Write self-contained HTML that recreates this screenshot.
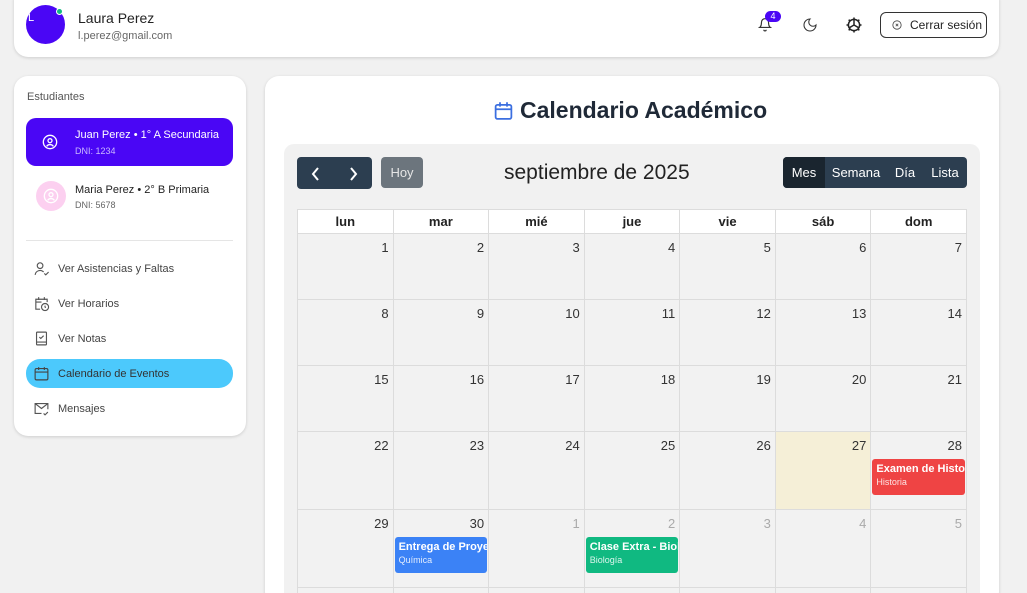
<!DOCTYPE html>
<html style="width:1027px;height:593px;overflow:hidden"><head><meta charset="utf-8">
<style>
*{box-sizing:border-box;margin:0;padding:0}
body{width:1027px;height:593px;overflow:hidden;background:#f1f1f1;font-family:"Liberation Sans",sans-serif;position:relative;color:#1f2937}
.abs{position:absolute}
.card{position:absolute;background:#fff;border-radius:14px;box-shadow:0 1px 3px rgba(0,0,0,.15)}
.nav{position:absolute;left:26px;width:207px;height:29px;border-radius:14px;font-size:11px;color:#444;display:flex;align-items:center;padding-left:32px}
.nav svg{position:absolute;left:7px;top:6px}
.grid{position:absolute;left:297px;top:209px;width:670px;border-collapse:collapse;table-layout:fixed}
.grid td,.grid th{border:1px solid #dcdcdc}
.grid th{background:#fff;height:24px;font-size:13px;font-weight:bold;color:#222}
.grid td{background:#f2f2f2;vertical-align:top;text-align:right;font-size:13px;color:#333;padding:6px 4px 0 0;position:relative}
.grid td.o{color:#aaa}
.ev{position:absolute;left:1px;right:1px;top:27px;height:36px;border-radius:3px;color:#fff;text-align:left;padding:4px 0 0 4px;overflow:hidden;white-space:nowrap}
.ev b{display:block;font-size:11px}
.ev span{display:block;font-size:9px;opacity:.85;margin-top:2px}
</style></head><body>
<div class="card" style="left:14px;top:-14px;width:985px;height:71px"></div>
<div class="abs" style="left:26px;top:5px;width:39px;height:39px;border-radius:50%;background:#4a06f5"></div>
<div class="abs" style="left:28px;top:12px;color:#fff;font-size:11px">L</div>
<div class="abs" style="left:56px;top:8px;width:7px;height:7px;border-radius:50%;background:#10b981;border:1px solid #fff"></div>
<div class="abs" style="left:78px;top:10px;font-size:14px;color:#222">Laura Perez</div>
<div class="abs" style="left:78px;top:30px;font-size:11px;color:#666">l.perez@gmail.com</div>
<svg class="abs" style="left:758px;top:17px" width="14" height="15" viewBox="0 0 24 24" fill="none" stroke="#333" stroke-width="2"><path d="M6 8a6 6 0 0 1 12 0c0 7 3 9 3 9H3s3-2 3-9"/><path d="M10 21a2 2 0 0 0 4 0"/></svg>
<div class="abs" style="left:765px;top:11px;width:16px;height:11px;border-radius:6px;background:#4a06f5;color:#fff;font-size:9px;text-align:center;line-height:11px">4</div>
<svg class="abs" style="left:802px;top:17px" width="16" height="16" viewBox="0 0 24 24" fill="none" stroke="#333" stroke-width="1.6"><path d="M12 3a6 6 0 0 0 9 9 9 9 0 1 1-9-9z"/></svg>
<svg class="abs" style="left:845px;top:16px" width="18" height="18" viewBox="0 0 24 24" fill="none" stroke="#222" stroke-width="2"><circle cx="12" cy="12" r="7.5"/><path d="M12 2v3M12 19v3M2 12h3M19 12h3M4.9 4.9l2.1 2.1M17 17l2.1 2.1M4.9 19.1L7 17M17 7l2.1-2.1"/><path d="M12 12V5M12 12l-6 3.5M12 12l6 3.5"/></svg>
<div class="abs" style="left:880px;top:12px;width:107px;height:26px;border:1px solid #333;border-radius:6px;font-size:12px;color:#222;line-height:24px;padding-left:29px">Cerrar sesión</div>
<svg class="abs" style="left:892px;top:20px" width="10" height="10" viewBox="0 0 24 24" fill="none" stroke="#444" stroke-width="2"><circle cx="12" cy="12" r="10"/><path d="M9 9l6 6M15 9l-6 6"/></svg>

<div class="card" style="left:14px;top:76px;width:232px;height:360px"></div>
<div class="abs" style="left:27px;top:91px;font-size:11px;color:#555">Estudiantes</div>
<div class="abs" style="left:26px;top:118px;width:207px;height:48px;border-radius:10px;background:#4a06f5"></div>
<svg class="abs" style="left:42px;top:134px" width="16" height="16" viewBox="0 0 24 24" fill="none" stroke="#fff" stroke-width="2"><circle cx="12" cy="12" r="10"/><circle cx="12" cy="10" r="3"/><path d="M7 18.5a6 6 0 0 1 10 0"/></svg>
<div class="abs" style="left:75px;top:129px;font-size:11px;color:#fff">Juan Perez • 1° A Secundaria</div>
<div class="abs" style="left:75px;top:146px;font-size:9px;color:#c9b8ff">DNI: 1234</div>
<div class="abs" style="left:36px;top:181px;width:30px;height:30px;border-radius:50%;background:#fcd0f0"></div>
<svg class="abs" style="left:43px;top:188px" width="16" height="16" viewBox="0 0 24 24" fill="none" stroke="#fff" stroke-width="2"><circle cx="12" cy="12" r="10"/><circle cx="12" cy="10" r="3"/><path d="M7 18.5a6 6 0 0 1 10 0"/></svg>
<div class="abs" style="left:75px;top:184px;font-size:11px;color:#222">Maria Perez • 2° B Primaria</div>
<div class="abs" style="left:75px;top:200px;font-size:9px;color:#666">DNI: 5678</div>
<div class="abs" style="left:26px;top:240px;width:207px;height:1px;background:#e5e5e5"></div>
<div class="nav" style="top:254px"><svg width="17" height="17" viewBox="0 0 24 24" fill="none" stroke="#555" stroke-width="1.6"><circle cx="10" cy="8" r="4"/><path d="M3 21a7 7 0 0 1 12-4M16 19l2 2 4-4"/></svg>Ver Asistencias y Faltas</div>
<div class="nav" style="top:289px"><svg width="17" height="17" viewBox="0 0 24 24" fill="none" stroke="#555" stroke-width="1.6"><path d="M10 20H4V6h16v4M4 10h8M8 3v4M16 3v4"/><circle cx="17" cy="17" r="5"/><path d="M17 15v2l1 1"/></svg>Ver Horarios</div>
<div class="nav" style="top:324px"><svg width="17" height="17" viewBox="0 0 24 24" fill="none" stroke="#555" stroke-width="1.6"><rect x="5" y="3" width="14" height="18" rx="1"/><path d="M5 17h14M9 10l2 2 4-4"/></svg>Ver Notas</div>
<div class="nav" style="top:359px;background:#4cc9fc;color:#333"><svg width="17" height="17" viewBox="0 0 24 24" fill="none" stroke="#444" stroke-width="1.6"><rect x="3" y="5" width="18" height="16" rx="2"/><path d="M3 10h18M8 3v4M16 3v4"/></svg>Calendario de Eventos</div>
<div class="nav" style="top:394px"><svg width="17" height="17" viewBox="0 0 24 24" fill="none" stroke="#555" stroke-width="1.6"><path d="M12 19H3V5h18v8M3 5l9 7 9-7M15 19l2 2 4-4"/></svg>Mensajes</div>

<div class="card" style="left:265px;top:76px;width:734px;height:530px"></div>
<svg class="abs" style="left:493px;top:100px" width="21" height="22" viewBox="0 0 24 24" fill="none" stroke="#3b6fe0" stroke-width="2"><rect x="3" y="5" width="18" height="16" rx="2"/><path d="M3 10h18M8 2v5M16 2v5"/></svg>
<div class="abs" style="left:520px;top:97px;font-size:23px;font-weight:bold;color:#1f2937">Calendario Académico</div>
<div class="abs" style="left:284px;top:144px;width:696px;height:449px;background:#f1f1f1;border-radius:10px 10px 0 0"></div>
<div class="abs" style="left:297px;top:157px;width:75px;height:32px;background:#2c3e50;border-radius:4px"></div>
<svg class="abs" style="left:309px;top:166px" width="60" height="16" viewBox="0 0 60 16" fill="none" stroke="#fff" stroke-width="2"><path d="M9 2l-5 6 5 6M42 2l5 6-5 6"/></svg>
<div class="abs" style="left:381px;top:157px;width:42px;height:31px;background:#6c757d;border-radius:4px;color:#e6e6e6;font-size:13px;text-align:center;line-height:31px">Hoy</div>
<div class="abs" style="left:504px;top:161px;font-size:21px;color:#222">septiembre de 2025</div>
<div class="abs" style="left:783px;top:157px;width:184px;height:31px;background:#2c3e50;border-radius:4px;display:flex;font-size:13px;color:#fff;line-height:31px;overflow:hidden">
<div style="background:#1a252f;width:42px;text-align:center">Mes</div><div style="width:62px;text-align:center">Semana</div><div style="width:36px;text-align:center">Día</div><div style="width:44px;text-align:center">Lista</div></div>
<div class="abs" style="left:0;top:0;width:1027px;height:593px;overflow:hidden">
<table class="grid">
<tr><th>lun</th><th>mar</th><th>mié</th><th>jue</th><th>vie</th><th>sáb</th><th>dom</th></tr>
<tr style="height:66px"><td>1</td><td>2</td><td>3</td><td>4</td><td>5</td><td>6</td><td>7</td></tr>
<tr style="height:66px"><td>8</td><td>9</td><td>10</td><td>11</td><td>12</td><td>13</td><td>14</td></tr>
<tr style="height:66px"><td>15</td><td>16</td><td>17</td><td>18</td><td>19</td><td>20</td><td>21</td></tr>
<tr style="height:78px"><td>22</td><td>23</td><td>24</td><td>25</td><td>26</td><td style="background:#f5efd7">27</td><td>28<div class="ev" style="background:#ef4444"><b>Examen de Historia</b><span>Historia</span></div></td></tr>
<tr style="height:78px"><td>29</td><td>30<div class="ev" style="background:#3b82f6"><b>Entrega de Proyecto</b><span>Química</span></div></td><td class="o">1</td><td class="o">2<div class="ev" style="background:#10b981"><b>Clase Extra - Biología</b><span>Biología</span></div></td><td class="o">3</td><td class="o">4</td><td class="o">5</td></tr>
<tr style="height:20px"><td></td><td></td><td></td><td></td><td></td><td></td><td></td></tr>
</table>
</div>
</body></html>
